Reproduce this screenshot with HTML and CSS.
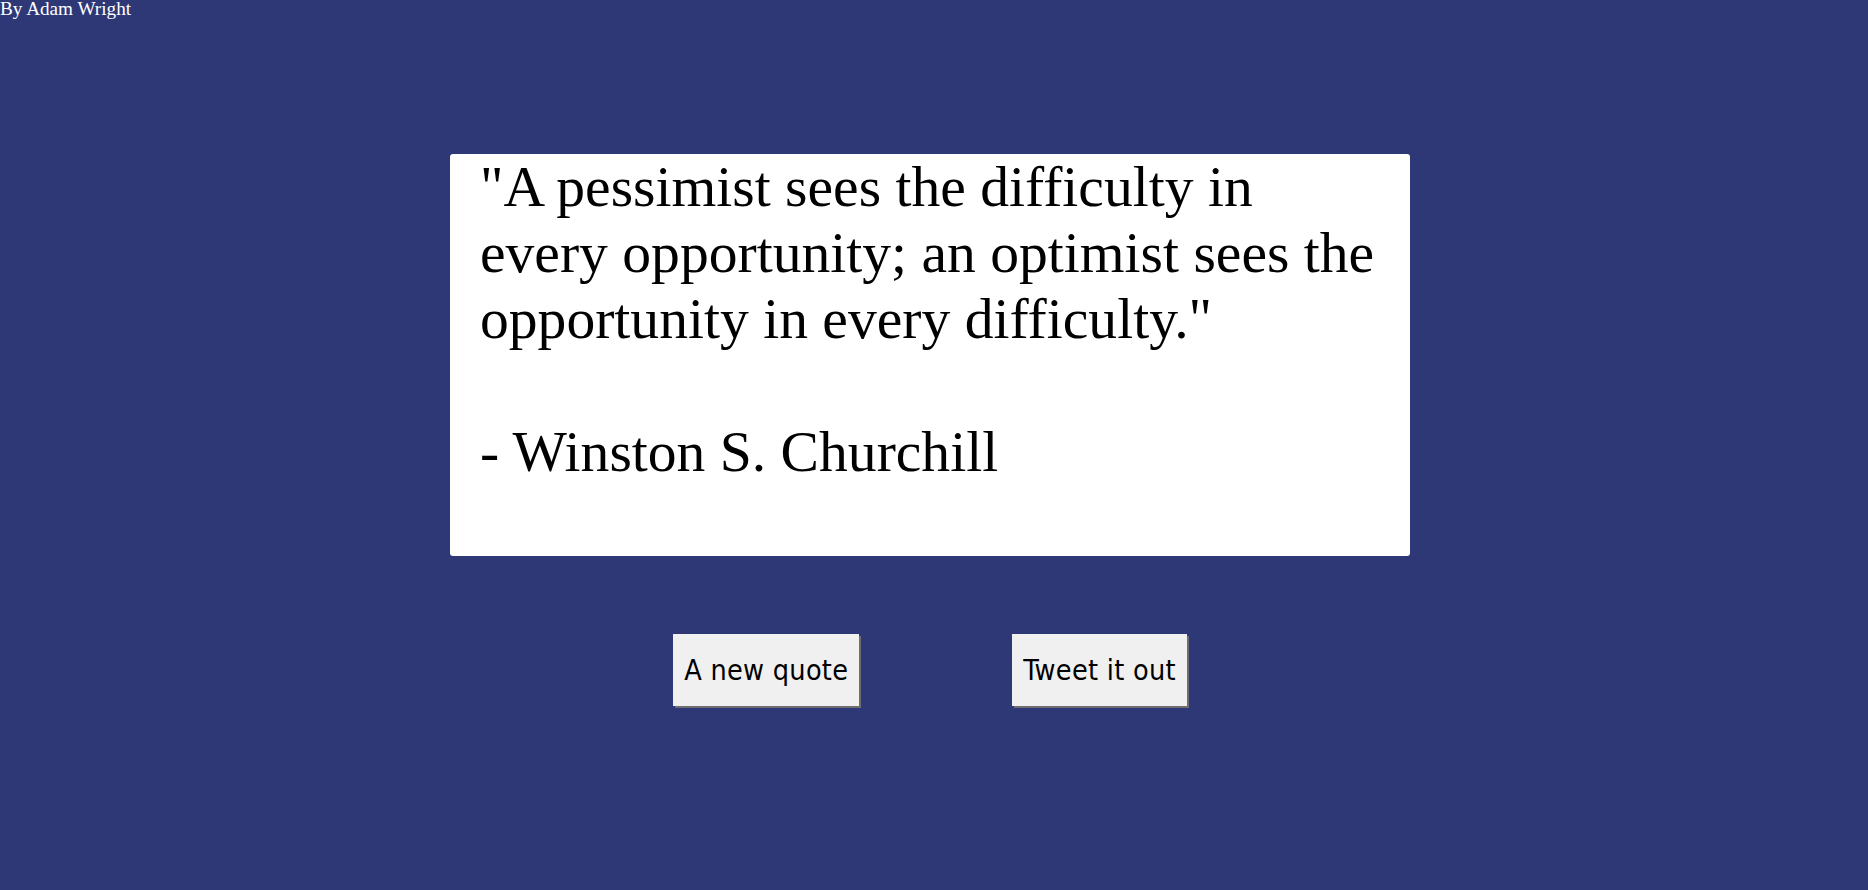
FILE: index.html
```html
<!DOCTYPE html>
<html lang="en">
<head>
<meta charset="utf-8">
<title>Random Quote Machine</title>
<link rel="stylesheet" href="styles.css">
</head>
<body>
<p class="byline">By Adam Wright</p>
<main class="main">
  <div class="card">
    <p class="quote">"A pessimist sees the difficulty in every opportunity; an optimist sees the opportunity in every difficulty."<br><br>- Winston S. Churchill</p>
  </div>
  <div class="actions">
    <button class="btn" type="button">A new quote</button>
    <button class="btn" type="button">Tweet it out</button>
  </div>
</main>
</body>
</html>
```
FILE: styles.css
```css
html, body {
  margin: 0;
  padding: 0;
}
body {
  background: #2e3876;
  min-height: 890px;
  font-family: "Liberation Serif", "Times New Roman", serif;
}
.byline {
  margin: 0;
  color: #ffffff;
  font-size: 19.2px;
  line-height: 18px;
  height: 18px;
}
.main {
  display: flex;
  flex-direction: column;
  align-items: center;
  padding-right: 8px;
  margin-top: 136px;
}
.card {
  box-sizing: border-box;
  width: 960px;
  background: #ffffff;
  border-radius: 3px;
  padding: 0 30px 71px 30px;
}
.quote {
  margin: 0;
  color: #000000;
  font-size: 57.6px;
  line-height: 66.2px;
}
.actions {
  display: flex;
  justify-content: center;
  gap: 153px;
  margin-top: 78px;
}
.btn {
  height: 72px;
  padding: 0 11px;
  border: none;
  border-radius: 0;
  background: #f0f0f0;
  box-shadow: 2px 2px 0 #6e6e6e;
  color: #000000;
  font-family: "DejaVu Sans Condensed", "DejaVu Sans", sans-serif;
  font-stretch: condensed;
  font-size: 28.5px;
  letter-spacing: 0.3px;
  cursor: pointer;
}
```
